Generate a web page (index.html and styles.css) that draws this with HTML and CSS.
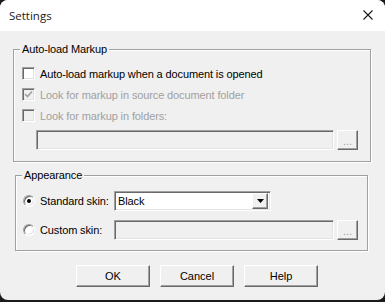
FILE: index.html
```html
<!DOCTYPE html>
<html lang="en">
<head>
    <meta charset="UTF-8">
    <title>Settings</title>
    <link rel="stylesheet" href="styles.css">
</head>
<body>
<div class="window">
    <div class="titlebar">
        <span class="title">Settings</span>
        <svg class="close" width="10" height="10" viewBox="0 0 10 10"><path d="M0.5 0.5 L9.5 9.5 M9.5 0.5 L0.5 9.5" stroke="#1a1a1a" stroke-width="1.1" fill="none"/></svg>
    </div>

    <div class="content">
        <fieldset class="group group-markup">
            <legend>Auto-load Markup</legend>
            <label class="row"><span class="check"></span>Auto-load markup when a document is opened</label>
            <label class="row disabled"><span class="check checked"><svg width="9" height="9" viewBox="0 0 9 9"><path d="M1 4 L3.5 6.5 L8 1.5" stroke="#a0a0a0" stroke-width="1.6" fill="none"/></svg></span>Look for markup in source document folder</label>
            <label class="row disabled"><span class="check"></span>Look for markup in folders:</label>
            <div class="path-row">
                <div class="field field-folders"></div>
                <button class="browse">...</button>
            </div>
        </fieldset>

        <fieldset class="group group-appearance">
            <legend>Appearance</legend>
            <div class="skin-row">
                <span class="radio on"></span>
                <span class="radio-label">Standard skin:</span>
                <div class="combo">
                    <span class="combo-text">Black</span>
                    <span class="combo-btn"><svg width="7" height="4" viewBox="0 0 7 4"><path d="M0 0 H7 L3.5 4 Z" fill="#000"/></svg></span>
                </div>
            </div>
            <div class="skin-row second">
                <span class="radio"></span>
                <span class="radio-label">Custom skin:</span>
                <div class="field field-skin"></div>
                <button class="browse">...</button>
            </div>
        </fieldset>

        <div class="buttons">
            <button class="btn">OK</button>
            <button class="btn">Cancel</button>
            <button class="btn">Help</button>
        </div>
    </div>
</div>
</body>
</html>
```

FILE: styles.css
```css
html, body { margin: 0; padding: 0; }
body { background: #1b1b1b; width: 385px; height: 302px; overflow: hidden; font-family: "Liberation Sans", Arial, sans-serif; font-size: 11px; letter-spacing: -0.12px; }

.window { width: 385px; height: 300px; background: #f0f0f0; border-radius: 8px; overflow: hidden; }
.titlebar { height: 31px; background: #fff; display: flex; align-items: center; justify-content: space-between; padding: 0 12px 0 9px; box-sizing: border-box; }
.title { font-family: "Open Sans", "Noto Sans", sans-serif; font-size: 11.5px; color: #1a1a1a; letter-spacing: 0; }
.close { margin-top: -2px; }

.content { padding: 12px 0 0 13px; }

.group { margin: 0; box-sizing: border-box; min-width: 0; border: 1px solid #a0a0a0; box-shadow: 1px 1px 0 #fff, inset 1px 1px 0 #fff; }
.group legend { padding: 0 2px; margin-left: -2px; line-height: 13px; background: #f0f0f0; color: #000; }
.group-markup { width: 358px; padding: 7px 11px 11px 8px; }
.group-appearance { width: 353px; margin: 7px 0 0 2px; padding: 9px 9px 10px 7px; }
.group-appearance legend { margin-left: -1px; }

.row { display: flex; align-items: center; height: 21px; color: #000; }
.row.disabled { color: #a0a0a0; }

.check { width: 13px; height: 13px; box-sizing: border-box; margin-right: 5px; background: #fff; border: 1px solid; border-color: #a0a0a0 #fff #fff #a0a0a0; box-shadow: inset 1px 1px 0 #696969, inset -1px -1px 0 #e3e3e3; display: flex; align-items: center; justify-content: center; }
.disabled .check { background: #f0f0f0; }

.path-row { display: flex; margin: 4px 0 0 14px; gap: 3px; }
.field { height: 20px; box-sizing: border-box; border: 1px solid; border-color: #a0a0a0 #fff #fff #a0a0a0; box-shadow: inset 1px 1px 0 #696969, inset -1px -1px 0 #e3e3e3; background: #f0f0f0; }
.field-folders { width: 298px; }
.field-skin { width: 220px; margin-right: 3px; }

.browse { width: 21px; height: 20px; padding: 0 0 3px; margin: 0; box-sizing: border-box; font: inherit; color: #a0a0a0; background: #f0f0f0; border: 1px solid; border-color: #fff #696969 #696969 #fff; box-shadow: inset -1px -1px 0 #a0a0a0; display: flex; align-items: flex-end; justify-content: center; line-height: 10px; }

.skin-row { display: flex; align-items: center; height: 20px; }
.skin-row.second { margin-top: 9px; }
.radio { width: 12px; height: 12px; box-sizing: border-box; border-radius: 50%; margin-right: 5px; background: #fff; border: 1px solid; border-color: #a0a0a0 #fff #fff #a0a0a0; box-shadow: inset 1px 1px 0 #696969, inset -1px -1px 0 #e3e3e3; display: flex; align-items: center; justify-content: center; }
.radio.on::after { content: ""; width: 4px; height: 4px; border-radius: 50%; background: #000; }
.radio-label { width: 74px; }

.combo { width: 157px; height: 20px; box-sizing: border-box; display: flex; align-items: center; justify-content: space-between; background: #fff; border: 1px solid; border-color: #a0a0a0 #fff #fff #a0a0a0; box-shadow: inset 1px 1px 0 #696969, inset -1px -1px 0 #e3e3e3; padding: 1px 2px 1px 3px; }
.combo-text { color: #000; }
.combo-btn { width: 16px; height: 16px; box-sizing: border-box; background: #f0f0f0; border: 1px solid; border-color: #fff #696969 #696969 #fff; box-shadow: inset -1px -1px 0 #a0a0a0; display: flex; align-items: center; justify-content: center; }

.buttons { display: flex; gap: 10px; margin: 14px 0 0 63px; }
.btn { width: 74px; height: 22px; padding: 0; font: inherit; color: #000; background: #f0f0f0; border: 1px solid; border-color: #fff #696969 #696969 #fff; box-shadow: inset -1px -1px 0 #a0a0a0; }
```
